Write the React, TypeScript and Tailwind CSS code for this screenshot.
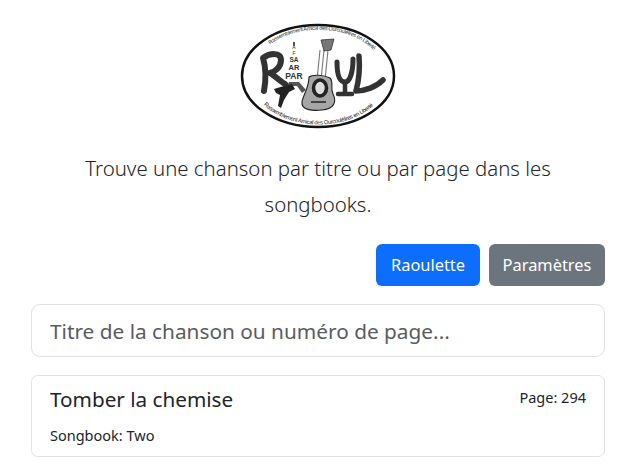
import React from 'react'

function Logo() {
  return (
    <svg width="156" height="108" viewBox="0 0 156 108" className="block">
      <defs>
        <path id="arcTop" d="M 27 25 A 66 46 0 0 1 136 31" />
        <path id="arcBottom" d="M 21 80 A 68 47 0 0 0 136 81" />
      </defs>
      <ellipse cx="78" cy="54" rx="76" ry="51" fill="#fff" stroke="#111" strokeWidth="2.5" />
      <text fontFamily="'Liberation Sans', sans-serif" fontSize="5.6" fill="#333" letterSpacing="-0.4">
        <textPath href="#arcTop" startOffset="50%" textAnchor="middle">Rassemblement Amical des Ourcoulélires en Liberté</textPath>
      </text>
      <text fontFamily="'Liberation Sans', sans-serif" fontSize="5.8" fill="#222" letterSpacing="-0.35">
        <textPath href="#arcBottom" startOffset="50%" textAnchor="middle">Rassemblement Amical des Ourcoulélires en Liberté</textPath>
      </text>
      {/* tour eiffel */}
      <g fontFamily="'Liberation Sans', sans-serif" fill="#333" textAnchor="middle">
        <text x="54" y="27" fontSize="5">A</text>
        <text x="54" y="33" fontSize="5">F</text>
        <text x="54" y="40" fontSize="6.5" fontWeight="700">SA</text>
        <text x="54" y="48" fontSize="7.5" fontWeight="700">AR</text>
        <text x="54" y="57" fontSize="8.5" fontWeight="700">PAR</text>
      </g>
      <path d="M53 20 L55 20 L55 24 L53 24 Z M44 70 L49 60 L59 60 L66 68 L62 71 L57 64 L51 64 L48 71 Z" fill="#555" />
      {/* R */}
      <path d="M24 69 C26 58 26 46 23 36 C30 31 41 30 41 38 C41 46 34 50 30 51 C35 54 40 59 45 62" fill="none" stroke="#333" strokeWidth="6" strokeLinecap="round" strokeLinejoin="round" />
      {/* oiseau */}
      <path d="M34 67 L44 64 L52 62 L55 67 L49 70 L44 78 L41 86 L38 84 L40 73 L36 71 Z" fill="#222" />
      {/* guitare */}
      <path d="M80 28 L77 58 M84 28 L81 58 M88 28 L85 58" stroke="#777" strokeWidth="1.1" />
      <path d="M81 18 L94 17 L91 28 L84 29 Z" fill="#777" stroke="#333" strokeWidth="0.8" />
      <path d="M69 55 C73 52 84 53 90 56 C94 60 90 66 93 72 C97 80 94 87 82 88 C72 89 61 88 62 80 C63 73 69 66 69 55 Z" fill="#a6a6a6" stroke="#222" strokeWidth="1.1" />
      <ellipse cx="80" cy="66" rx="6.5" ry="8" fill="#ddd" stroke="#222" strokeWidth="3.5" />
      <path d="M71 80h15" stroke="#444" strokeWidth="2" />
      {/* U */}
      <path d="M97 40 C97 52 99 60 105 60 C110 60 113 50 113 37" fill="none" stroke="#333" strokeWidth="5" strokeLinecap="round" />
      <path d="M105 60 L105 71 M98 72 L112 72" stroke="#333" strokeWidth="4.5" strokeLinecap="round" />
      {/* L */}
      <path d="M119 34 C120 46 119 58 116 69 C125 69 136 65 143 58" fill="none" stroke="#333" strokeWidth="5.5" strokeLinecap="round" strokeLinejoin="round" />
    </svg>
  )
}

export default function App() {
  return (
    <div className="min-h-[476px] bg-white pr-[29px] pl-[31px] font-['Noto_Sans','Open_Sans',sans-serif] text-[#212529]">
      <div className="flex justify-center pt-[22px]">
        <Logo />
      </div>

      <p className="mx-auto mt-[20px] w-[500px] text-center text-[20.4px] leading-[36px] font-light">
        Trouve une chanson par titre ou par page dans les songbooks.
      </p>

      <div className="mt-[22px] flex justify-end gap-[9px]">
        <button className="h-[42px] w-[104px] rounded-[6px] bg-[#0d6efd] text-[16.4px] text-white">Raoulette</button>
        <button className="h-[42px] w-[116px] rounded-[6px] bg-[#6c757d] text-[16.4px] text-white">Paramètres</button>
      </div>

      <input
        className="mt-[18px] block h-[53px] w-full rounded-[9px] border border-[#dee2e6] px-[18px] text-[20.8px] outline-none placeholder:text-[#595c5f]"
        placeholder="Titre de la chanson ou numéro de page..."
      />

      <div className="mt-[18px] h-[82px] rounded-[7px] border border-[#dee2e6] px-[18px] pt-[9px]">
        <div className="flex items-start justify-between">
          <h5 className="text-[20.7px] leading-[28px]">Tomber la chemise</h5>
          <span className="pt-[2px] text-[14.5px] leading-[20px]">Page: 294</span>
        </div>
        <p className="mt-[12px] text-[14.5px] leading-[20px]">Songbook: Two</p>
      </div>
    </div>
  )
}
